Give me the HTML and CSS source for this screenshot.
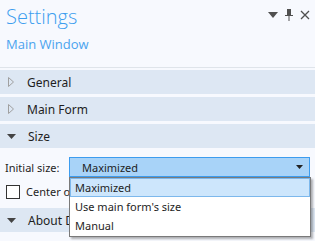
FILE: index.html
```html
<!DOCTYPE html>
<html lang="en">
<head>
    <meta charset="UTF-8">
    <title>Settings</title>
    <link rel="stylesheet" href="styles.css">
</head>
<body>
    <div class="panel">
        <div class="header">
            <div class="titles">
                <div class="title">Settings</div>
                <div class="subtitle">Main Window</div>
            </div>
            <div class="tools">
                <svg width="10" height="6" viewBox="0 0 10 6"><path d="M0 0h10L5 6z" fill="#505050"/></svg>
                <svg width="8" height="12" viewBox="0 0 8 12"><path d="M2 0h4v6h2v1H4.5v5h-1V7H0V6h2z" fill="#505050"/></svg>
                <svg width="10" height="10" viewBox="0 0 10 10"><path d="M1 1l8 8M9 1l-8 8" stroke="#505050" stroke-width="1.3"/></svg>
            </div>
        </div>

        <div class="section">
            <svg class="arrow" width="6" height="10" viewBox="0 0 6 10"><path d="M0.5 0.5v9l5-4.5z" fill="none" stroke="#a0a0a0"/></svg>
            <span>General</span>
        </div>
        <div class="section">
            <svg class="arrow" width="6" height="10" viewBox="0 0 6 10"><path d="M0.5 0.5v9l5-4.5z" fill="none" stroke="#a0a0a0"/></svg>
            <span>Main Form</span>
        </div>
        <div class="section">
            <svg class="arrow-down" width="9" height="5" viewBox="0 0 9 5"><path d="M0 0h9L4.5 5z" fill="#444"/></svg>
            <span>Size</span>
        </div>

        <div class="section-body">
            <div class="field">
                <span class="label">Initial size:</span>
                <div class="combo">
                    <span>Maximized</span>
                    <svg width="7" height="4" viewBox="0 0 7 4"><path d="M0 0h7L3.5 4z" fill="#222"/></svg>
                    <ul class="dropdown">
                        <li class="selected">Maximized</li>
                        <li>Use main form's size</li>
                        <li>Manual</li>
                    </ul>
                </div>
            </div>
            <label class="check">
                <span class="box"></span>
                <span>Center on screen</span>
            </label>
        </div>

        <div class="section">
            <svg class="arrow-down" width="9" height="5" viewBox="0 0 9 5"><path d="M0 0h9L4.5 5z" fill="#444"/></svg>
            <span>About Dialog</span>
        </div>
    </div>
</body>
</html>
```

FILE: styles.css
```css
* {
    box-sizing: border-box;
}
body {
    margin: 0;
    background-color: #f7f9fe;
    font-family: "Noto Sans", "Open Sans", sans-serif;
    font-size: 11px;
    color: #1e1e1e;
    overflow: hidden;
}
.panel {
    width: 315px;
    height: 241px;
}
.header {
    display: flex;
    justify-content: space-between;
    height: 68px;
    border-bottom: 1px solid #dfe4ea;
    padding: 0 5px 0 6px;
}
.titles {
    padding-top: 4px;
}
.title {
    font-family: "Open Sans", sans-serif;
    font-weight: 300;
    font-size: 20px;
    line-height: 26px;
    color: #3d9eef;
}
.subtitle {
    font-family: "Open Sans", sans-serif;
    font-size: 13px;
    line-height: 18px;
    margin-top: 5px;
    color: #4aa3ee;
}
.tools {
    display: flex;
    align-items: center;
    gap: 7px;
    height: 14px;
    margin-top: 8px;
}
.section {
    display: flex;
    align-items: center;
    height: 24px;
    margin-top: 2px;
    padding-left: 7px;
    background-color: #dde7f3;
    font-size: 12px;
}
.section + .section {
    margin-top: 3px;
}
.section .arrow {
    margin-left: 1px;
    margin-right: 13px;
}
.section .arrow-down {
    margin-right: 12px;
}
.section-body {
    padding: 9px 5px 0 5px;
    height: 58px;
}
.field {
    display: flex;
    align-items: center;
    gap: 8px;
}
.label {
    width: 56px;
    white-space: nowrap;
}
.combo {
    position: relative;
    flex: 1;
    display: flex;
    align-items: center;
    justify-content: space-between;
    height: 20px;
    padding: 0 6px 0 12px;
    background-color: #a8d3f8;
    border: 1px solid #3c9cef;
}
.dropdown {
    position: absolute;
    top: 19px;
    left: -1px;
    right: -2px;
    margin: 0;
    padding: 0 0 1px 0;
    list-style: none;
    background-color: #fff;
    border: 1px solid #7a7a7a;
    box-shadow: 2px 2px 2px rgba(0,0,0,0.3);
    z-index: 2;
    white-space: nowrap;
}
.dropdown li {
    height: 19px;
    line-height: 17px;
    padding-left: 4px;
    border: 1px solid transparent;
}
.dropdown li.selected {
    background-color: #cde6fc;
    border-color: #7db8ec;
}
.check {
    display: flex;
    align-items: center;
    gap: 6px;
    margin-top: 7px;
    padding-left: 1px;
    white-space: nowrap;
}
.check .box {
    width: 14px;
    height: 14px;
    border: 1px solid #333;
    background-color: #fff;
}
```
